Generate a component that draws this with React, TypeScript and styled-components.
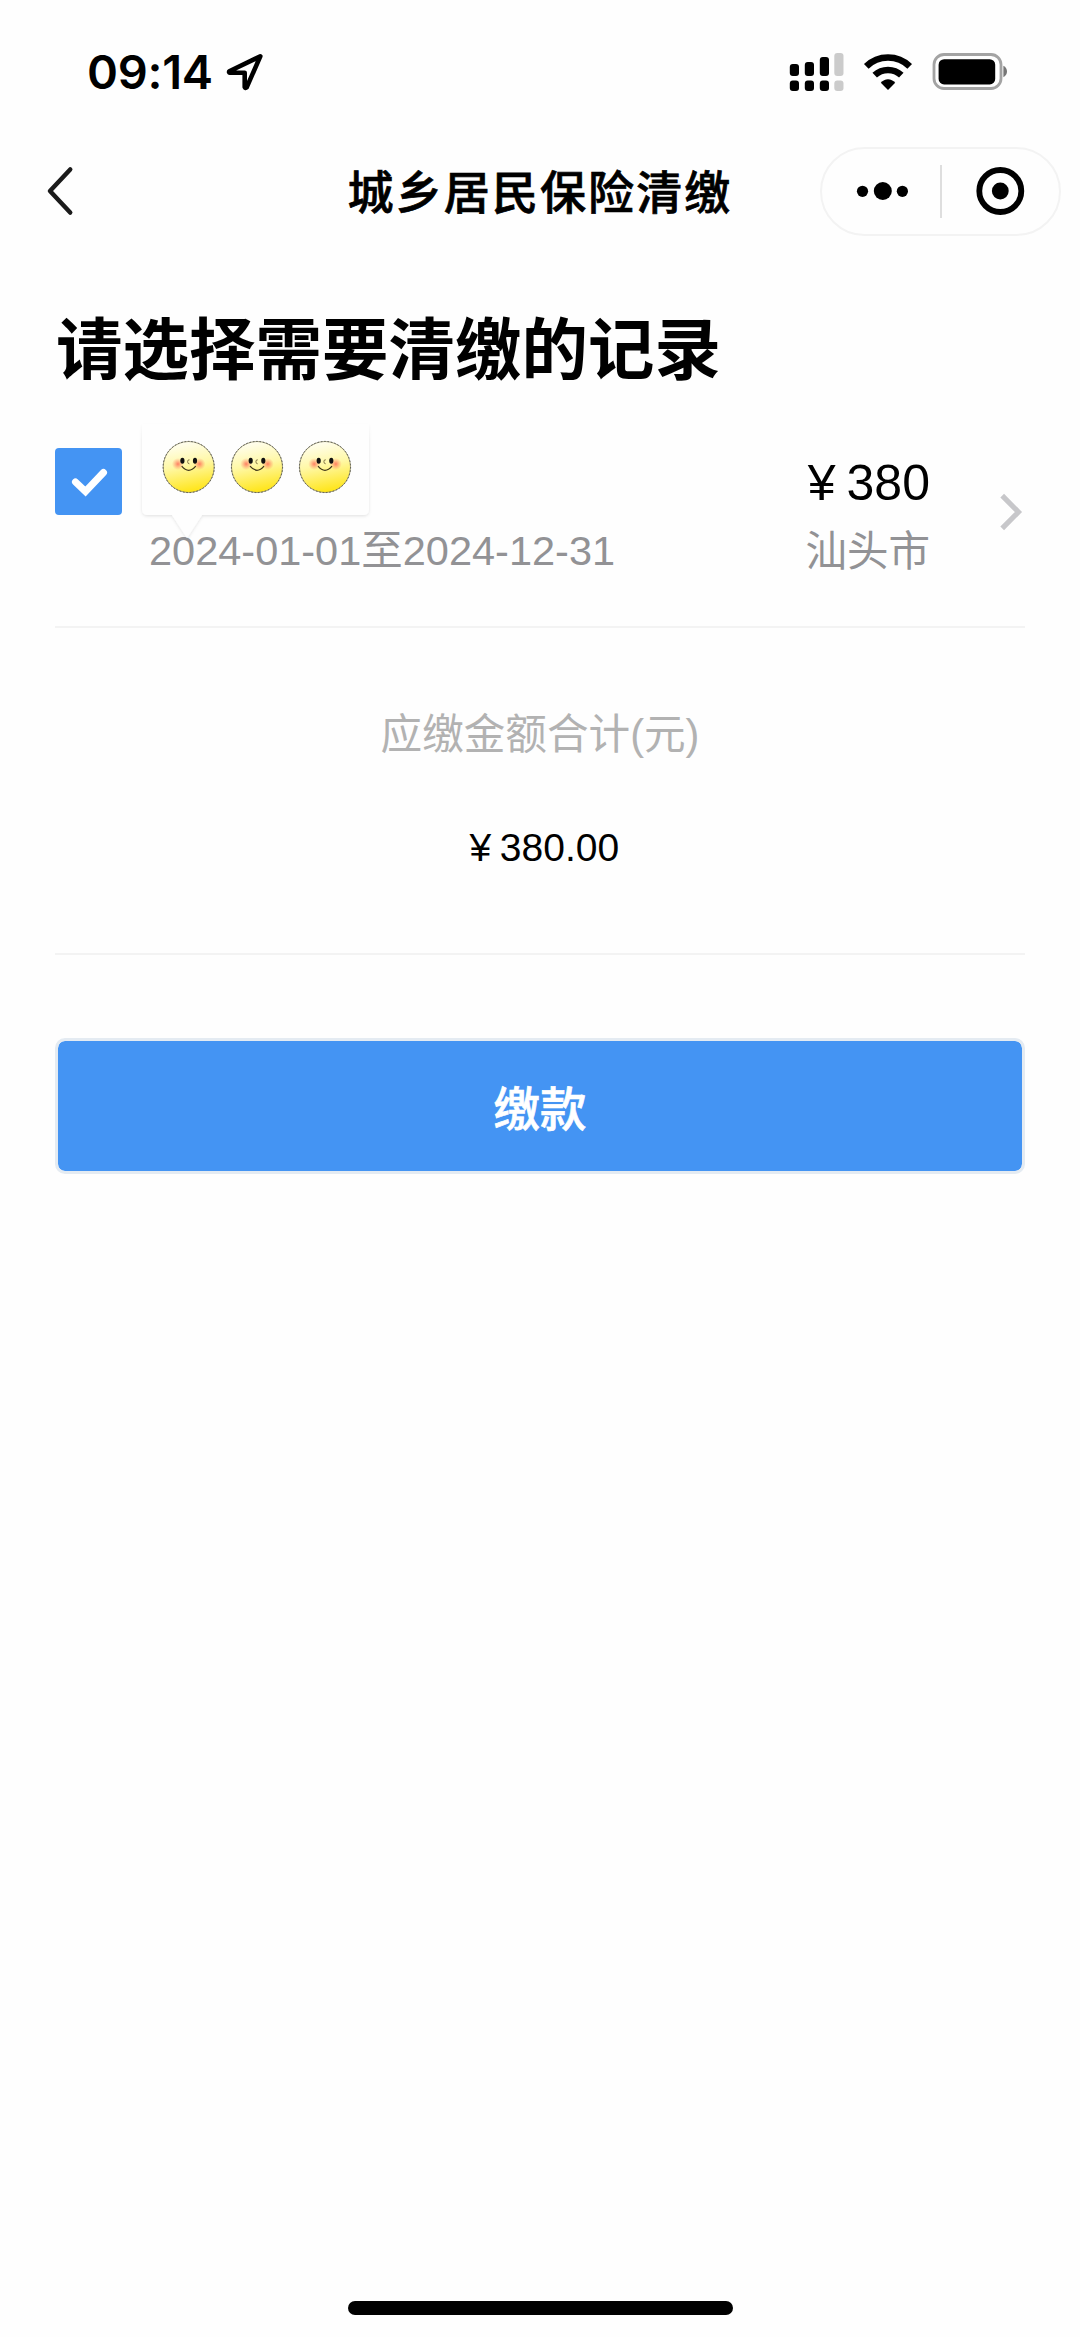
import React from "react";
import styled, { createGlobalStyle } from "styled-components";

const cjk = '"Noto Sans CJK SC", sans-serif';
const latin = '"Liberation Sans", "Noto Sans CJK SC", sans-serif';

const GlobalStyle = createGlobalStyle`
  * { box-sizing: border-box; }
  body { margin: 0; background: #fefefe; }
  svg { display: block; }
`;

const Screen = styled.div`
  display: flex;
  flex-direction: column;
  width: 1080px;
  height: 2337px;
  background: #fefefe;
  color: #000;
  font-family: ${latin};
`;

const StatusBar = styled.header`
  display: flex;
  align-items: center;
  justify-content: space-between;
  height: 143px;
  padding: 0 73px 0 87px;
`;

const Clock = styled.div`
  display: flex;
  align-items: center;
  gap: 13px;
  font: 600 47px/60px Inter, sans-serif;
  letter-spacing: -0.3px;
`;

const Indicators = styled.div`
  display: flex;
  align-items: center;
`;

const NavBar = styled.nav`
  display: grid;
  grid-template-columns: 260px 1fr 260px;
  align-items: center;
  height: 96px;
  padding: 0 19px 0 45px;
`;

const BackButton = styled.button`
  justify-self: start;
  padding: 0;
  border: 0;
  background: none;
`;

const NavTitle = styled.h1`
  margin: -4px 0 0 -26px;
  font: 500 46px/66px ${cjk};
  letter-spacing: 2.1px;
  text-align: center;
  white-space: nowrap;
  -webkit-text-stroke: 0.7px #000;
`;

const Capsule = styled.div`
  display: grid;
  grid-template-columns: 1fr 2px 1fr;
  align-items: center;
  justify-items: center;
  justify-self: end;
  width: 241px;
  height: 89px;
  border: 2px solid #f3f3f3;
  border-radius: 45px;
`;

const CapsuleDivider = styled.i`
  width: 2px;
  height: 53px;
  background: #dedede;
`;

const Content = styled.main`
  display: flex;
  flex-direction: column;
  flex: 1;
  padding: 0 55px;
`;

const Heading = styled.h2`
  margin: 58px 0 0;
  padding-left: 1px;
  font: 700 66.5px/96px ${cjk};
  white-space: nowrap;
`;

const RecordRow = styled.section`
  display: flex;
  height: 233px;
  margin-top: 2px;
  padding-top: 53px;
  border-bottom: 2px solid #f3f3f3;
`;

const Checkbox = styled.div`
  width: 67px;
  height: 67px;
  border-radius: 4px;
  background: #4494f3;
`;

const RecordInfo = styled.div`
  position: relative;
  flex: 1;
  padding: 73px 0 0 27px;
`;

const RecordSide = styled.div`
  display: flex;
  flex-direction: column;
  align-items: flex-end;
  gap: 4px;
`;

const NameBubble = styled.div`
  position: absolute;
  left: 10px;
  top: -28px;
`;

const Muted = styled.div`
  font-size: 41.5px;
  line-height: 60px;
  color: #929295;
  white-space: nowrap;
`;

const Amount = styled.div<{ $size: number; $line: number }>`
  font-size: ${(p) => p.$size}px;
  line-height: ${(p) => p.$line}px;
  white-space: nowrap;
`;

const Yen = styled.span`
  display: inline-block;
  width: 1em;
  text-align: center;
`;

const ChevronSlot = styled.div`
  width: 95px;
  padding: 45px 0 0 70px;
`;

const Summary = styled.section`
  display: flex;
  flex-direction: column;
  align-items: center;
  height: 327px;
  padding-top: 77px;
  border-bottom: 2px solid #f3f3f3;
`;

const SummaryLabel = styled.div`
  margin-bottom: 55px;
  font-size: 41.6px;
  line-height: 60px;
  color: #b2b2b2;
`;

const PayButton = styled.button`
  height: 136px;
  margin-top: 83px;
  padding: 0;
  border: 3px solid #e4ebf2;
  border-radius: 10px;
  background: #4494f3;
  background-clip: padding-box;
  color: #fff;
  font: 500 46.5px/66px ${cjk};
  -webkit-text-stroke: 0.7px #fff;
`;

const HomeIndicator = styled.div`
  align-self: center;
  width: 385px;
  height: 14px;
  margin-bottom: 22px;
  border-radius: 7px;
  background: #000;
`;

const bars = [
  { x: 0, y: 11, fill: "#000" },
  { x: 15, y: 9, fill: "#000" },
  { x: 30, y: 4, fill: "#000" },
  { x: 44.5, y: 0, fill: "#cbcbcb" },
];

const StatusIcons = () => (
  <svg width="218" height="40" viewBox="0 0 218 40">
    <g transform="translate(0.8 0)">
      {bars.map((b) => (
        <g key={b.x} fill={b.fill}>
          <rect x={b.x} y={b.y + 1} width="9.2" height={23 - b.y} rx="3" />
          <rect x={b.x} y="28.5" width="9.2" height="10.5" rx="3" />
        </g>
      ))}
    </g>
    <g fill="none" stroke="#000" strokeWidth="6.6">
      <path d="M77.3 14.4A31 31 0 0 1 120.7 14.4" />
      <path d="M85.7 23.2A19.5 19.5 0 0 1 112.3 23.2" />
    </g>
    <path d="M99 38l-7.2-7.2q3-3.6 7.2-3.6t7.2 3.6z" fill="#000" />
    <rect x="145" y="2.5" width="67" height="34" rx="10" fill="none" stroke="#a3a3a3" strokeWidth="2.8" />
    <rect x="149.6" y="7.2" width="56.6" height="25.2" rx="5.5" fill="#000" />
    <path d="M214.4 13.8q3.6 2 3.6 5.7t-3.6 5.7z" fill="#777" />
  </svg>
);

const Face = ({ x }: { x: number }) => (
  <g transform={`translate(${x} 47)`}>
    <circle r="25.5" fill="url(#skin)" stroke="#8f8c66" strokeWidth="0.8" />
    <circle r="25.6" fill="none" stroke="#444" strokeWidth="0.8" strokeDasharray="1.6 1.8" />
    <circle cx="-10.8" cy="-3" r="6" fill="url(#blush)" />
    <circle cx="10.8" cy="-3" r="6" fill="url(#blush)" />
    <ellipse cx="-6.3" cy="-6.2" rx="2.1" ry="3" fill="#111" />
    <ellipse cx="6.3" cy="-6.2" rx="2.1" ry="3" fill="#111" />
    <path d="M.8-7.2q-2-.4-1.9 2 .1 2 1.8 2" fill="none" stroke="#6b5a30" strokeWidth="0.8" />
    <path d="M-7-.8Q0 7.4 7-.8" fill="none" stroke="#40351a" strokeWidth="1.2" />
  </g>
);

const Bubble = () => (
  <svg width="248" height="125" viewBox="0 0 248 125">
    <defs>
      <linearGradient id="skin" x1="0.4" y1="0" x2="0.6" y2="1">
        <stop offset="0" stopColor="#fffef2" />
        <stop offset="0.45" stopColor="#fff8a6" />
        <stop offset="1" stopColor="#ffe411" />
      </linearGradient>
      <radialGradient id="blush">
        <stop offset="0" stopColor="#ff6a55" stopOpacity="0.85" />
        <stop offset="1" stopColor="#ff8a60" stopOpacity="0" />
      </radialGradient>
      <filter id="soft" x="-10%" y="-10%" width="120%" height="125%">
        <feDropShadow dx="0" dy="1.2" stdDeviation="1.8" floodColor="#000" floodOpacity="0.11" />
      </filter>
      <linearGradient id="fade" x1="0" y1="0" x2="0" y2="1">
        <stop offset="0" stopColor="#000" />
        <stop offset="0.16" stopColor="#fff" />
      </linearGradient>
      <mask id="fadeMask" maskUnits="userSpaceOnUse" x="0" y="0" width="248" height="125">
        <rect width="248" height="125" fill="url(#fade)" />
      </mask>
    </defs>
    <g mask="url(#fadeMask)">
      <path
        d="M10 4H237V89Q237 95 231 95H70L55 118L40 95H16Q10 95 10 89Z"
        fill="#fefefe"
        filter="url(#soft)"
      />
    </g>
    <Face x={56.7} />
    <Face x={125} />
    <Face x={193} />
  </svg>
);

export default function App() {
  return (
    <Screen>
      <GlobalStyle />
      <StatusBar>
        <Clock>
          09:14
          <svg width="38" height="38" viewBox="0 0 38 38" fill="none" stroke="#000" strokeWidth="4.6" strokeLinejoin="round">
            <path d="M34.3 3.3L3.3 18.2Q2.6 19.4 4 19.7H18.7V34Q19.4 35.6 20.7 34.4Z" />
          </svg>
        </Clock>
        <Indicators>
          <StatusIcons />
        </Indicators>
      </StatusBar>
      <NavBar>
        <BackButton aria-label="返回">
          <svg width="30" height="50" viewBox="0 0 30 50" fill="none" stroke="#1b1b1b" strokeWidth="4.5" strokeLinecap="round" strokeLinejoin="round">
            <path d="M25.2 3.5L5 25L25.2 46.5" />
          </svg>
        </BackButton>
        <NavTitle>城乡居民保险清缴</NavTitle>
        <Capsule>
          <svg width="54" height="20" viewBox="0 0 54 20">
            <circle cx="8.5" cy="10.3" r="5.6" />
            <circle cx="28.8" cy="10" r="9" />
            <circle cx="48.4" cy="10.3" r="5.6" />
          </svg>
          <CapsuleDivider />
          <svg width="50" height="50" viewBox="0 0 50 50">
            <circle cx="25.3" cy="25" r="21" fill="none" stroke="#000" strokeWidth="5.8" />
            <circle cx="25.3" cy="25" r="8.4" />
          </svg>
        </Capsule>
      </NavBar>
      <Content>
        <Heading>请选择需要清缴的记录</Heading>
        <RecordRow>
          <Checkbox>
            <svg width="67" height="67" viewBox="0 0 67 67" fill="none" stroke="#fff" strokeWidth="7" strokeLinecap="round">
              <path d="M20.5 34L30.5 43.5L48.5 24.5" />
            </svg>
          </Checkbox>
          <RecordInfo>
            <Muted>2024-01-01至2024-12-31</Muted>
            <NameBubble>
              <Bubble />
            </NameBubble>
          </RecordInfo>
          <RecordSide>
            <Amount $size={50} $line={70}>
              <Yen>¥</Yen>380
            </Amount>
            <Muted>汕头市</Muted>
          </RecordSide>
          <ChevronSlot>
            <svg width="24" height="38" viewBox="0 0 24 38" fill="none" stroke="#c7c7ca" strokeWidth="5.2">
              <path d="M2.2 2.6L18.4 19L2.2 35.4" />
            </svg>
          </ChevronSlot>
        </RecordRow>
        <Summary>
          <SummaryLabel>应缴金额合计(元)</SummaryLabel>
          <Amount $size={39} $line={56}>
            <Yen>¥</Yen>380.00
          </Amount>
        </Summary>
        <PayButton>缴款</PayButton>
      </Content>
      <HomeIndicator />
    </Screen>
  );
}
